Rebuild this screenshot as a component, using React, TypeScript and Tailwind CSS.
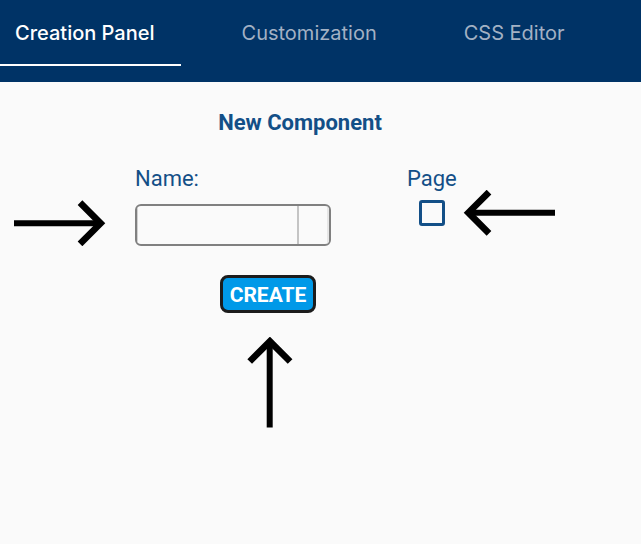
import React, { useState } from "react";

const tabs = ["Creation Panel", "Customization", "CSS Editor"];

function Arrow({ className }: { className: string }) {
  return (
    <svg className={className} width="92" height="46" viewBox="0 0 92 46" fill="none" aria-hidden="true">
      <path d="M0 23.300H86" stroke="#000" strokeWidth="6" />
      <path d="M66 2.700L86.600 23.300L66 43.900" stroke="#000" strokeWidth="6.600" />
    </svg>
  );
}

function UpArrow() {
  return (
    <svg className="mt-6 ml-[247px]" width="46" height="92" viewBox="0 0 46 92" fill="none" aria-hidden="true">
      <path d="M22.700 6V90.500" stroke="#000" strokeWidth="6" />
      <path d="M2.700 24.500L22.900 4.300L43.100 24.500" stroke="#000" strokeWidth="6.600" />
    </svg>
  );
}

export default function App() {
  const [active, setActive] = useState(0);
  const [name, setName] = useState("");
  const [page, setPage] = useState(false);

  return (
    <div className="min-h-screen bg-[#fafafa] font-[Roboto,sans-serif] text-[22px] leading-7 text-[#134f87]">
      <header className="bg-[#003366] pb-4">
        <nav className="flex gap-[46px]" role="tablist">
          {tabs.map((tab, i) => (
            <button
              key={tab}
              role="tab"
              aria-selected={active === i}
              onClick={() => setActive(i)}
              className={
                "h-[66px] border-b-2 pt-0.5 pr-[26px] pl-[15px] text-xl font-[Inter,sans-serif] whitespace-nowrap " +
                (active === i ? "border-white font-medium text-white" : "border-transparent font-normal text-[#a3b1c4]")
              }
            >
              {tab}
            </button>
          ))}
        </nav>
      </header>

      <main className="pt-[27px]">
        <h1 className="w-[600px] max-w-full text-center font-bold">New Component</h1>

        <form onSubmit={(e) => e.preventDefault()}>
          <div className="mt-7 flex items-end pl-3.5">
            <Arrow className="mr-[29px] shrink-0" />
            <div className="w-[196px] shrink-0">
              <label htmlFor="name" className="block">
                Name:
              </label>
              <div className="mt-[11px] flex h-[42px] overflow-hidden rounded-md border-2 border-[#808080]">
                <input
                  id="name"
                  type="text"
                  value={name}
                  onChange={(e) => setName(e.target.value)}
                  className="min-w-0 flex-1 border-l border-[#d0d0d0] px-2 outline-none"
                />
                <span className="w-8 border-x-2 border-l-[#c4c4c4] border-r-[#e6e6e6]" />
              </div>
            </div>
            <div className="ml-[76px] flex shrink-0 flex-col items-center self-start">
              <label htmlFor="page">Page</label>
              <input
                id="page"
                type="checkbox"
                checked={page}
                onChange={(e) => setPage(e.target.checked)}
                className="mt-[7px] size-[26px] appearance-none rounded-[3px] border-[3px] border-[#134f87] checked:bg-[#134f87]"
              />
            </div>
            <Arrow className="mb-2.5 ml-1.5 shrink-0 rotate-180" />
          </div>

          <button
            type="submit"
            className="mt-[29px] ml-[220px] block h-[38px] w-24 rounded-lg border-[3px] border-[#1c1c1c] bg-[#0099e8] pt-0.5 text-[21px] font-bold text-white"
          >
            CREATE
          </button>
          <UpArrow />
        </form>
      </main>
    </div>
  );
}
